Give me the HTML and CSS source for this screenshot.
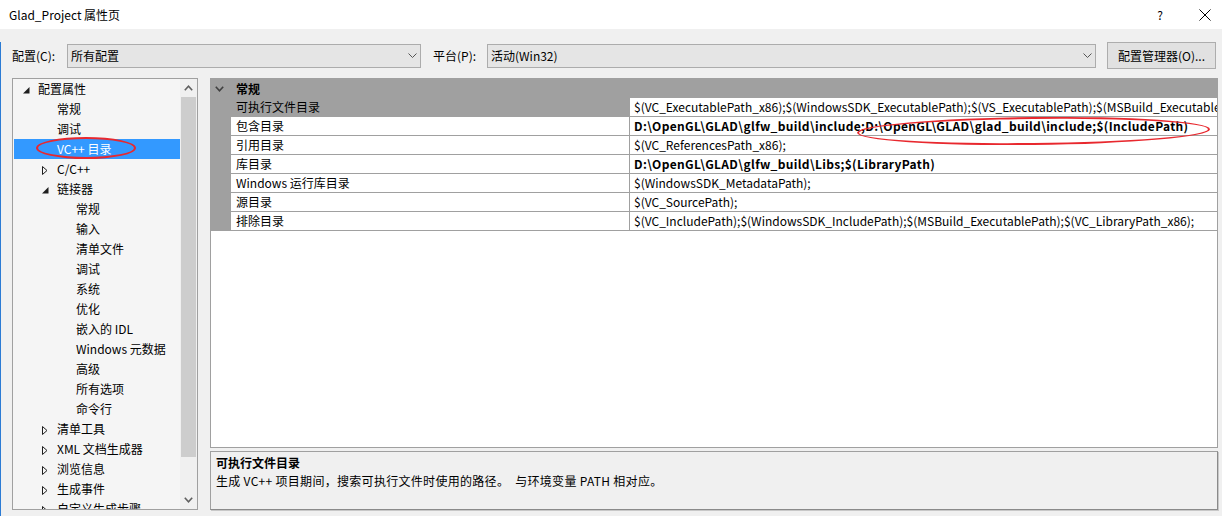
FILE: index.html
```html
<!DOCTYPE html>
<html lang="zh-CN">
<head>
<meta charset="utf-8">
<title>Glad_Project 属性页</title>
<link rel="stylesheet" href="styles.css">
</head>
<body>
<div class="titlebar">
  <span class="title">Glad_Project 属性页</span>
  <div class="title-btns">
    <span class="help">?</span>
    <svg class="close" width="12" height="12" viewBox="0 0 12 12"><path d="M0.5 0.5 L11.5 11.5 M11.5 0.5 L0.5 11.5" stroke="#000" stroke-width="1" fill="none"/></svg>
  </div>
</div>
<div class="window">
  <div class="toolbar">
    <label class="lbl lbl-config">配置(C):</label>
    <div class="combo combo-config"><span>所有配置</span><svg class="chev" width="9" height="5" viewBox="0 0 9 5"><path d="M0.5 0.5 L4.5 4.5 L8.5 0.5" stroke="#555" fill="none"/></svg></div>
    <label class="lbl lbl-platform">平台(P):</label>
    <div class="combo combo-platform"><span>活动(Win32)</span><svg class="chev" width="9" height="5" viewBox="0 0 9 5"><path d="M0.5 0.5 L4.5 4.5 L8.5 0.5" stroke="#555" fill="none"/></svg></div>
    <button class="btn">配置管理器(O)...</button>
  </div>
  <div class="main">
    <div class="tree">
      <ul class="tree-list">
        <li class="l0"><span class="exp"><svg width="7" height="7" viewBox="0 0 7 7"><path d="M6.5 0 L6.5 6.5 L0 6.5 Z" fill="#1e1e1e"/></svg></span>配置属性</li>
        <li class="l1"><span class="exp"></span>常规</li>
        <li class="l1"><span class="exp"></span>调试</li>
        <li class="l1 sel"><span class="exp"></span>VC++ 目录</li>
        <li class="l1"><span class="exp"><svg class="col" width="6" height="9" viewBox="0 0 6 9"><path d="M0.5 0.5 L5 4.5 L0.5 8.5 Z" fill="none" stroke="#1e1e1e"/></svg></span>C/C++</li>
        <li class="l1"><span class="exp"><svg width="7" height="7" viewBox="0 0 7 7"><path d="M6.5 0 L6.5 6.5 L0 6.5 Z" fill="#1e1e1e"/></svg></span>链接器</li>
        <li class="l2"><span class="exp"></span>常规</li>
        <li class="l2"><span class="exp"></span>输入</li>
        <li class="l2"><span class="exp"></span>清单文件</li>
        <li class="l2"><span class="exp"></span>调试</li>
        <li class="l2"><span class="exp"></span>系统</li>
        <li class="l2"><span class="exp"></span>优化</li>
        <li class="l2"><span class="exp"></span>嵌入的 IDL</li>
        <li class="l2"><span class="exp"></span>Windows 元数据</li>
        <li class="l2"><span class="exp"></span>高级</li>
        <li class="l2"><span class="exp"></span>所有选项</li>
        <li class="l2"><span class="exp"></span>命令行</li>
        <li class="l1"><span class="exp"><svg class="col" width="6" height="9" viewBox="0 0 6 9"><path d="M0.5 0.5 L5 4.5 L0.5 8.5 Z" fill="none" stroke="#1e1e1e"/></svg></span>清单工具</li>
        <li class="l1"><span class="exp"><svg class="col" width="6" height="9" viewBox="0 0 6 9"><path d="M0.5 0.5 L5 4.5 L0.5 8.5 Z" fill="none" stroke="#1e1e1e"/></svg></span>XML 文档生成器</li>
        <li class="l1"><span class="exp"><svg class="col" width="6" height="9" viewBox="0 0 6 9"><path d="M0.5 0.5 L5 4.5 L0.5 8.5 Z" fill="none" stroke="#1e1e1e"/></svg></span>浏览信息</li>
        <li class="l1"><span class="exp"><svg class="col" width="6" height="9" viewBox="0 0 6 9"><path d="M0.5 0.5 L5 4.5 L0.5 8.5 Z" fill="none" stroke="#1e1e1e"/></svg></span>生成事件</li>
        <li class="l1"><span class="exp"><svg class="col" width="6" height="9" viewBox="0 0 6 9"><path d="M0.5 0.5 L5 4.5 L0.5 8.5 Z" fill="none" stroke="#1e1e1e"/></svg></span>自定义生成步骤</li>
      </ul>
      <div class="vscroll">
        <div class="sb-btn"><svg width="9" height="6" viewBox="0 0 9 6"><path d="M0.8 5.2 L4.5 1.2 L8.2 5.2" stroke="#606060" stroke-width="1.6" fill="none"/></svg></div>
        <div class="sb-thumb"></div>
        <div class="sb-track"></div>
        <div class="sb-btn"><svg width="9" height="6" viewBox="0 0 9 6"><path d="M0.8 0.8 L4.5 4.8 L8.2 0.8" stroke="#606060" stroke-width="1.6" fill="none"/></svg></div>
      </div>
    </div>
    <div class="right">
      <div class="grid">
        <div class="grid-head">
          <span class="cat-chev"><svg width="9" height="6" viewBox="0 0 9 6"><path d="M0.8 0.8 L4.5 4.8 L8.2 0.8" stroke="#404040" stroke-width="1.6" fill="none"/></svg></span>
          <span class="cat-name">常规</span>
        </div>
        <div class="row row-sel">
          <div class="margin"></div>
          <div class="name">可执行文件目录</div>
          <div class="value">$(VC_ExecutablePath_x86);$(WindowsSDK_ExecutablePath);$(VS_ExecutablePath);$(MSBuild_ExecutablePath);$(SystemRoot)\SysWow64;$(FxCopDir);$(PATH);</div>
        </div>
        <div class="row">
          <div class="margin"></div>
          <div class="name">包含目录</div>
          <div class="value bold">D:\OpenGL\GLAD\glfw_build\include;D:\OpenGL\GLAD\glad_build\include;$(IncludePath)</div>
        </div>
        <div class="row">
          <div class="margin"></div>
          <div class="name">引用目录</div>
          <div class="value">$(VC_ReferencesPath_x86);</div>
        </div>
        <div class="row">
          <div class="margin"></div>
          <div class="name">库目录</div>
          <div class="value bold">D:\OpenGL\GLAD\glfw_build\Libs;$(LibraryPath)</div>
        </div>
        <div class="row">
          <div class="margin"></div>
          <div class="name">Windows 运行库目录</div>
          <div class="value">$(WindowsSDK_MetadataPath);</div>
        </div>
        <div class="row">
          <div class="margin"></div>
          <div class="name">源目录</div>
          <div class="value">$(VC_SourcePath);</div>
        </div>
        <div class="row">
          <div class="margin"></div>
          <div class="name">排除目录</div>
          <div class="value">$(VC_IncludePath);$(WindowsSDK_IncludePath);$(MSBuild_ExecutablePath);$(VC_LibraryPath_x86);</div>
        </div>
      </div>
      <div class="desc">
        <div class="desc-title">可执行文件目录</div>
        <div class="desc-text">生成 VC++ 项目期间，搜索可执行文件时使用的路径。&nbsp; 与环境变量 PATH 相对应。</div>
      </div>
    </div>
  </div>
</div>
<div class="mark mark-tree"></div>
<div class="mark mark-include"></div>
</body>
</html>
```
FILE: styles.css
```css
* { box-sizing: border-box; }
html, body { margin: 0; padding: 0; }
body {
  width: 1222px;
  height: 516px;
  overflow: hidden;
  background: #f0f0f0;
  font-family: "Noto Sans CJK SC", "Noto Sans", sans-serif;
  font-size: 12px;
  color: #000;
  position: relative;
}
.titlebar {
  height: 29px;
  background: #fff;
  display: flex;
  align-items: center;
  justify-content: space-between;
  padding-left: 9px;
}
.title { font-size: 12px; line-height: 16px; }
.title-btns { display: flex; align-items: center; }
.help { font-size: 12px; margin-right: 36px; line-height: 16px; }
.close { margin-right: 11px; }

.window {
  height: 487px;
  border-left: 1px solid #2b7bd4;
}
.toolbar {
  display: flex;
  align-items: center;
  height: 27px;
  margin-top: 13px;
  margin-bottom: 9px;
  padding-left: 11px;
}
.lbl { line-height: 16px; }
.lbl-config { width: 55px; }
.lbl-platform { width: 54px; margin-left: 12px; }
.combo {
  height: 24px;
  background: #e5e5e5;
  border: 1px solid #acacac;
  display: flex;
  align-items: center;
  justify-content: space-between;
  padding: 0 3px 0 3px;
}
.combo span { line-height: 16px; }
.combo-config { width: 354px; }
.combo-platform { width: 609px; }
.btn {
  margin-left: 11px;
  width: 109px;
  height: 27px;
  background: #e1e1e1;
  border: 1px solid #adadad;
  font-family: inherit;
  font-size: 12px;
  color: #000;
  padding: 0;
}

.main {
  display: flex;
  gap: 12px;
  padding-left: 11px;
}
.tree {
  width: 186px;
  height: 432px;
  border: 1px solid #a0a0a0;
  background: #f5f5f5;
  display: flex;
  overflow: hidden;
}
.tree-list {
  list-style: none;
  margin: 0;
  padding: 0 0 0 1px;
  width: 167px;
  flex: none;
  overflow: hidden;
}
.tree-list li {
  height: 20px;
  line-height: 20px;
  display: flex;
  align-items: center;
  white-space: nowrap;
}
.tree-list li.l0 { padding-left: 7px; }
.tree-list li.l1 { padding-left: 26px; }
.tree-list li.l2 { padding-left: 45px; }
.exp {
  width: 17px;
  height: 20px;
  flex: none;
  display: flex;
  align-items: center;
  padding-left: 2px;
}
.exp svg { margin-top: 3px; }
.exp svg.col { margin-top: 2px; }
.tree-list li.sel { background: #3399ff; color: #fff; }
.vscroll {
  width: 17px;
  flex: none;
  display: flex;
  flex-direction: column;
  background: #f0f0f0;
}
.sb-btn {
  height: 18px;
  display: flex;
  align-items: center;
  justify-content: center;
  flex: none;
}
.sb-thumb {
  height: 360px;
  margin: 0 1px;
  background: #cdcdcd;
  flex: none;
}
.sb-track { flex: 1; }

.right {
  width: 1008px;
  display: flex;
  flex-direction: column;
  gap: 3px;
}
.grid {
  height: 370px;
  border: 1px solid #a0a0a0;
  background: #fff;
  overflow: hidden;
}
.grid-head {
  height: 19px;
  background: #a0a0a0;
  display: flex;
  align-items: center;
}
.cat-chev {
  width: 17px;
  display: flex;
  justify-content: center;
  padding-top: 1px;
}
.cat-name { font-weight: bold; line-height: 16px; margin-left: 8px; }
.row {
  height: 19px;
  display: flex;
}
.margin { width: 20px; background: #a0a0a0; flex: none; }
.name {
  width: 399px;
  flex: none;
  border-right: 1px solid #a0a0a0;
  border-bottom: 1px solid #a0a0a0;
  padding-left: 5px;
  line-height: 18px;
  white-space: nowrap;
  overflow: hidden;
}
.value {
  flex: 1;
  min-width: 0;
  border-bottom: 1px solid #a0a0a0;
  padding-left: 4px;
  line-height: 18px;
  white-space: nowrap;
  overflow: hidden;
}
.value.bold { font-weight: bold; letter-spacing: 0.33px; }
.row-sel .name { background: #a0a0a0; }

.desc {
  height: 59px;
  border: 1px solid #a0a0a0;
  border-right-color: #8a8a8a;
  border-bottom-color: #8a8a8a;
  box-shadow: 1px 1px 0 #c8c8c8;
  background: #f0f0f0;
  padding: 2px 5px 0 5px;
}
.desc-title { font-weight: bold; line-height: 18px; }
.desc-text { line-height: 18px; white-space: nowrap; letter-spacing: 0.3px; }

.mark {
  position: absolute;
  border: 2.5px solid #e8282e;
  border-radius: 50%;
  pointer-events: none;
}
.mark-tree { left: 36px; top: 137px; width: 100px; height: 22px; }
.mark-include { left: 857px; top: 117px; width: 353px; height: 28px; transform: rotate(-0.6deg); }
```
